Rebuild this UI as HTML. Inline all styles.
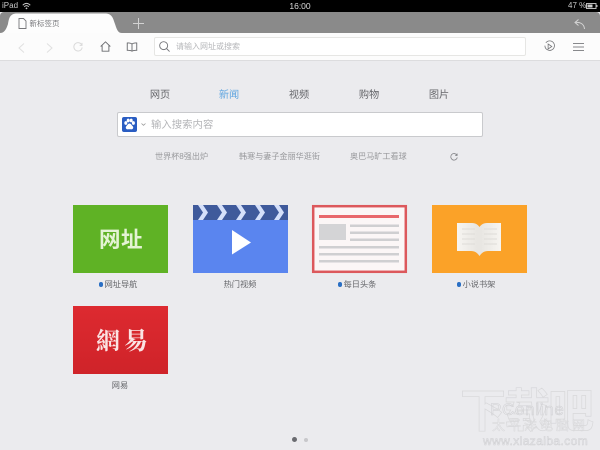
<!DOCTYPE html>
<html lang="zh-CN"><head><meta charset="utf-8">
<style>
html,body{margin:0;padding:0}
body{width:600px;height:450px;overflow:hidden;background:#ebebee;position:relative;font-family:"Liberation Sans","Noto Sans CJK SC",sans-serif}
#w{position:absolute;left:0;top:0;width:600px;height:450px;filter:blur(.3px)}
.a{position:absolute;white-space:nowrap}
.c{text-align:center}
svg{position:absolute;overflow:visible}
.lab{font-size:8.200px;color:#66676b;line-height:12px;top:279px;text-align:center;width:96px}
.lab i{display:inline-block;width:4.500px;height:4.500px;border-radius:50%;background:#2a6fc4;margin-right:1.500px;vertical-align:.5px}
.nav{font-size:10.200px;color:#66676b;top:89px;line-height:14px;width:40px;text-align:center}
.hot{font-size:8.100px;color:#98999c;top:151px;line-height:12px}
.wm{color:transparent;-webkit-text-stroke:.4px #d6d6d8}
</style></head>
<body>
<div id="w">
<div class="a" style="left:0;top:0;width:600px;height:12px;background:#000"></div>
<div class="a" style="left:2px;top:0;font-size:8px;line-height:12px;color:#c8c8c8">iPad</div>
<svg style="left:22px;top:2px" width="9" height="8" viewBox="0 0 12 10" fill="none" stroke="#c8c8c8" stroke-width="1.300"><path d="M1 4 Q6 -1 11 4M3 6 Q6 3 9 6"/><path d="M4.500 8 L6 6.800 L7.500 8 L6 9.500Z" fill="#c8c8c8" stroke="none"/></svg>
<div class="a c" style="left:280px;top:0;width:40px;font-size:8.500px;line-height:12px;color:#ddd">16:00</div>
<div class="a" style="left:568px;top:0;font-size:8px;line-height:12px;color:#c8c8c8">47 %</div>
<svg style="left:586px;top:3px" width="12" height="6" viewBox="0 0 12 6"><rect x=".5" y=".5" width="9.500" height="5" fill="none" stroke="#bbb"/><rect x="1.500" y="1.500" width="5" height="3" fill="#ccc"/><rect x="10.500" y="2" width="1" height="2" fill="#bbb"/></svg>

<div class="a" style="left:0;top:12px;width:600px;height:21px;background:#8a8a8a;border-radius:4px 4px 0 0"></div>
<svg style="left:0;top:12px" width="130" height="22" viewBox="0 0 130 22"><path d="M0 21 C4 21 6 18 8 12 C9 6 10 2 16 1.500 L106 1.500 C112 2 113 6 115 12 C117 18 118 21 122 21 L122 22 L0 22Z" fill="#fdfdfd"/></svg>
<svg style="left:18px;top:18px" width="9" height="11" viewBox="0 0 9 11" fill="none" stroke="#77787b" stroke-width=".9"><path d="M1 .5 H5.500 L8 3 V10.500 H1Z"/></svg>
<div class="a" style="left:29.500px;top:18px;font-size:7.500px;line-height:12px;color:#77787b">新标签页</div>
<svg style="left:133px;top:18px" width="11" height="11" viewBox="0 0 11 11" stroke="#d2d2d2" stroke-width="1"><path d="M5.500 0V11M0 5.500H11"/></svg>
<svg style="left:574px;top:19px" width="11" height="10" viewBox="0 0 11 10" fill="none" stroke="#d5d5d5" stroke-width="1"><path d="M4.500 .5 L1 3.500 L4.500 6.500M1 3.500 C6 3 10 4.500 10.500 10"/></svg>

<div class="a" style="left:0;top:33px;width:600px;height:27px;background:#fcfcfc;border-bottom:1px solid #dcdcde"></div>
<svg style="left:18px;top:43px" width="7" height="10" viewBox="0 0 7 10" fill="none" stroke="#e0e0e0" stroke-width="1"><path d="M6 .5 L1 5 L6 9.500"/></svg>
<svg style="left:46px;top:43px" width="7" height="10" viewBox="0 0 7 10" fill="none" stroke="#e0e0e0" stroke-width="1"><path d="M1 .5 L6 5 L1 9.500"/></svg>
<svg style="left:73px;top:42px" width="10" height="10" viewBox="0 0 12 12" fill="none" stroke="#dadada" stroke-width="1.200"><path d="M10.500 3.500 A5 5 0 1 0 11 6.500M10.800 1 V4 H8"/></svg>
<svg style="left:100px;top:41px" width="11" height="11" viewBox="0 0 13 13" fill="none" stroke="#6a6b6f" stroke-width="1.100"><path d="M.8 6.500 L6.500 1 L12.200 6.500M2.500 5.500 V12 H10.500 V5.500"/></svg>
<svg style="left:126px;top:42px" width="12" height="10" viewBox="0 0 13 12" fill="none" stroke="#6a6b6f" stroke-width="1.100"><path d="M6.500 2.500 C5 1 3 1 .8 1.200 V10 C3 9.800 5 10 6.500 11 C8 10 10 9.800 12.200 10 V1.200 C10 1 8 1 6.500 2.500 V11"/></svg>

<div class="a" style="left:154px;top:37px;width:370px;height:17px;background:#fff;border:1px solid #e6e6e4;border-radius:2px"></div>
<svg style="left:159px;top:41px" width="11" height="11" viewBox="0 0 13 13" fill="none" stroke="#75767a" stroke-width="1.100"><circle cx="5.500" cy="5.500" r="4.700"/><path d="M9 9 L12.500 12.500"/></svg>
<div class="a" style="left:176px;top:41px;font-size:8px;line-height:12px;color:#b6b7ba">请输入网址或搜索</div>
<svg style="left:544px;top:41px" width="11" height="11" viewBox="0 0 12 12" fill="none" stroke="#77787b" stroke-width=".9"><path d="M2 2 A5.200 5.200 0 1 1 1 5"/><path d="M4.500 3.300 L8.500 6 L4.500 8.700Z"/></svg>
<svg style="left:573px;top:43px" width="11" height="8" viewBox="0 0 11 8" stroke="#88898c" stroke-width="1"><path d="M0 .5H11M0 4H11M0 7.500H11"/></svg>

<div class="a nav" style="left:140px">网页</div>
<div class="a nav" style="left:209px;color:#5fa5e0">新闻</div>
<div class="a nav" style="left:279px">视频</div>
<div class="a nav" style="left:349px">购物</div>
<div class="a nav" style="left:419px">图片</div>

<div class="a" style="left:117px;top:112px;width:364px;height:23px;background:#fff;border:1px solid #c9cacd;border-radius:2px"></div>
<div class="a" style="left:122px;top:117px;width:15px;height:15px;background:#2a5dc2;border-radius:2px"></div>
<svg style="left:122px;top:117px" width="15" height="15" viewBox="0 0 15 15" fill="#fff"><ellipse cx="3.800" cy="6" rx="1.500" ry="1.900"/><ellipse cx="6.200" cy="3.500" rx="1.500" ry="1.900"/><ellipse cx="9.200" cy="3.500" rx="1.500" ry="1.900"/><ellipse cx="11.400" cy="6" rx="1.500" ry="1.900"/><path d="M7.500 6.500 C6 6.500 5.500 8 4.500 9 C3 10.500 4 12.500 6 12.300 C7 12.200 8 12.200 9 12.300 C11 12.500 12 10.500 10.500 9 C9.500 8 9 6.500 7.500 6.500Z"/></svg>
<svg style="left:141px;top:123px" width="5" height="3" viewBox="0 0 5 3" fill="none" stroke="#999" stroke-width=".8"><path d="M.5 .5 L2.500 2.300 L4.500 .5"/></svg>
<div class="a" style="left:151px;top:118px;font-size:10.400px;line-height:15px;color:#b4b5b8">输入搜索内容</div>

<div class="a hot" style="left:155px">世界杯8强出炉</div>
<div class="a hot" style="left:239px">韩寒与妻子金丽华逛街</div>
<div class="a hot" style="left:350px">奥巴马旷工看球</div>
<svg style="left:450px;top:153px" width="8" height="8" viewBox="0 0 9 9" fill="none" stroke="#808185" stroke-width=".9"><path d="M7.800 2.500 A3.700 3.700 0 1 0 8.200 5M8 .5 V2.800 H5.800"/></svg>

<!-- tile 1 -->
<div class="a" style="left:73px;top:205px;width:95px;height:68px;background:#5fb225"></div>
<div class="a c" style="left:73.500px;top:225px;width:95px;font-size:21.500px;line-height:30px;font-weight:700;color:#e4f3d4;letter-spacing:.5px">网址</div>
<div class="a lab" style="left:70px"><i></i>网址导航</div>

<!-- tile 2 -->
<svg style="left:193px;top:205px" width="95" height="68" viewBox="0 0 95 68">
<rect width="95" height="68" fill="#5a85ef"/>
<rect width="95" height="15" fill="#3f5a9b"/>
<g fill="#d5e0fa"><path d="M5 0H10L15 7.500L10 15H5L10 7.500Z"/><path d="M24 0H29L34 7.500L29 15H24L29 7.500Z"/><path d="M43 0H48L53 7.500L48 15H43L48 7.500Z"/><path d="M62 0H67L72 7.500L67 15H62L67 7.500Z"/><path d="M81 0H86L91 7.500L86 15H81L86 7.500Z"/></g>
<path d="M39 25 L58 37.500 L39 49.500Z" fill="#fff"/>
</svg>
<div class="a lab" style="left:192px">热门视频</div>

<!-- tile 3 -->
<svg style="left:312px;top:205px" width="95" height="68" viewBox="0 0 95 68">
<rect x="1.200" y="1.200" width="92.600" height="65.600" fill="#fbf6f6" stroke="#dc585c" stroke-width="2.500"/>
<rect x="7" y="10" width="80" height="3" fill="#e8686c"/>
<rect x="7" y="19" width="27" height="16" fill="#d4d4d6"/>
<g fill="#cfcfd1"><rect x="38" y="19.500" width="49" height="2.500"/><rect x="38" y="26.500" width="49" height="2.500"/><rect x="38" y="33.500" width="49" height="2.500"/><rect x="7" y="41" width="80" height="2.500"/><rect x="7" y="48" width="80" height="2.500"/><rect x="7" y="55" width="80" height="2.500"/></g>
</svg>
<div class="a lab" style="left:309px"><i></i>每日头条</div>

<!-- tile 4 -->
<svg style="left:432px;top:205px" width="95" height="68" viewBox="0 0 95 68">
<defs><linearGradient id="g" x1="0" x2="1" y1="0" y2="0"><stop offset="0" stop-color="#f7f5f1"/><stop offset=".46" stop-color="#e8e6e2"/><stop offset=".54" stop-color="#e8e6e2"/><stop offset="1" stop-color="#f7f5f1"/></linearGradient></defs>
<rect width="95" height="68" fill="#fba228"/>
<path d="M25 18 H40 C44 18 46 20 47.500 22 C49 20 51 18 55 18 H69 V46 H56 C52 46 49.500 48 47.500 51 C45.500 48 43 46 39 46 H25Z" fill="url(#g)"/>
<g stroke="#dedcd8" stroke-width="1"><path d="M30 24H43M30 29H43M30 34H43M30 39H43M52 24H65M52 29H65M52 34H65M52 39H65"/></g>
</svg>
<div class="a lab" style="left:428px"><i></i>小说书架</div>

<!-- tile 5 -->
<div class="a" style="left:73px;top:306px;width:95px;height:68px;background:linear-gradient(#dd2a30,#cf2329)"></div>
<div class="a" style="left:96px;top:323px;font-size:24px;line-height:32px;font-family:'Noto Serif CJK SC','Liberation Serif',serif;font-weight:700;color:#fbe3e3;letter-spacing:4px">網易</div>
<div class="a lab" style="left:72px;top:380px">网易</div>

<!-- dots -->
<div class="a" style="left:291.500px;top:437px;width:5px;height:5px;border-radius:50%;background:#6a6b70"></div>
<div class="a" style="left:304px;top:437.500px;width:4px;height:4px;border-radius:50%;background:#c8c8cb"></div>

<!-- watermark -->
<div class="a wm" style="left:460px;top:386px;font-size:46px;line-height:50px;font-weight:700;letter-spacing:-2px;-webkit-text-stroke:.7px #d8d8da">下载吧</div>
<div class="a wm" style="left:490px;top:401px;font-size:17px;line-height:18px;letter-spacing:.7px;-webkit-text-stroke:.5px #cfcfd2">PConline</div>
<div class="a wm" style="left:492px;top:419px;font-size:13px;line-height:14px;letter-spacing:3px">太平洋电脑网</div>
<div class="a wm" style="left:483px;top:435px;font-size:12px;line-height:13px;letter-spacing:.4px;-webkit-text-stroke:.5px #cfcfd2">www.xiazaiba.com</div>
</div>
</body></html>
